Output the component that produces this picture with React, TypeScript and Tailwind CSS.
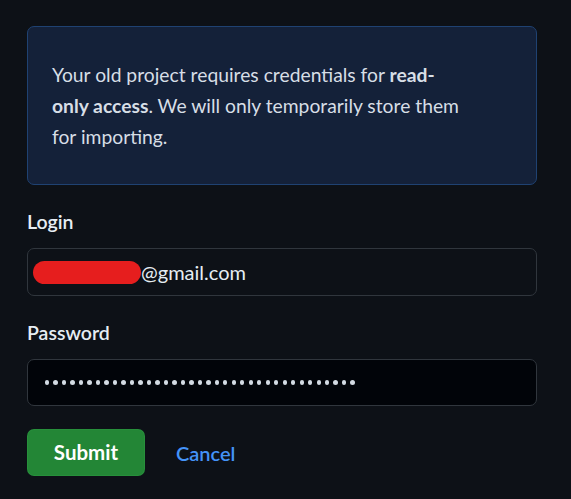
const font = { fontFamily: 'Lato, "Open Sans", "Liberation Sans", sans-serif' }

const DOTS = Array.from({ length: 37 })

export default function App() {
  return (
    <div
      className="min-h-[499px] w-full bg-[#0d1117] pt-[26px] pl-[27px] text-[#e6edf3]"
      style={font}
    >
      <div className="w-[510px]">
        <div className="rounded-[7px] border border-[#1f4272] bg-[#142139] py-[32px] pr-[72px] pl-[24px] text-[19.3px] leading-[31px] text-[#d7dee6]">
          Your old project requires credentials for{" "}
          <span className="font-bold">read-only access</span>. We will only
          temporarily store them for importing.
        </div>

        <div className="mt-[23px] text-[19.5px] font-semibold leading-[28px] text-[#e6edf3]">
          Login
        </div>
        <div className="mt-[12px] flex h-[48px] items-center rounded-[7px] border border-[#30363d] bg-[#0d1117]">
          <span className="ml-[5px] h-[23px] w-[108px] rounded-full bg-[#e61e1e]" />
          <span className="text-[20px] text-[#e6edf3]">@gmail.com</span>
        </div>

        <div className="mt-[23px] text-[19.5px] font-semibold leading-[28px] text-[#e6edf3]">
          Password
        </div>
        <div className="mt-[12px] flex h-[47px] items-center gap-[4.2px] rounded-[7px] border border-[#30363d] bg-[#010409] pl-[17px]">
          {DOTS.map((_, i) => (
            <span key={i} className="h-[4.3px] w-[4.3px] rounded-full bg-[#d3dbe3]" />
          ))}
        </div>

        <div className="mt-[23px] flex items-center">
          <button className="h-[47px] w-[118px] rounded-[7px] border border-[#2ea043]/40 bg-[#238636] text-[20.5px] font-bold text-white">
            Submit
          </button>
          <button className="ml-[31px] text-[20px] font-semibold text-[#4493f8]">
            Cancel
          </button>
        </div>
      </div>
    </div>
  )
}
